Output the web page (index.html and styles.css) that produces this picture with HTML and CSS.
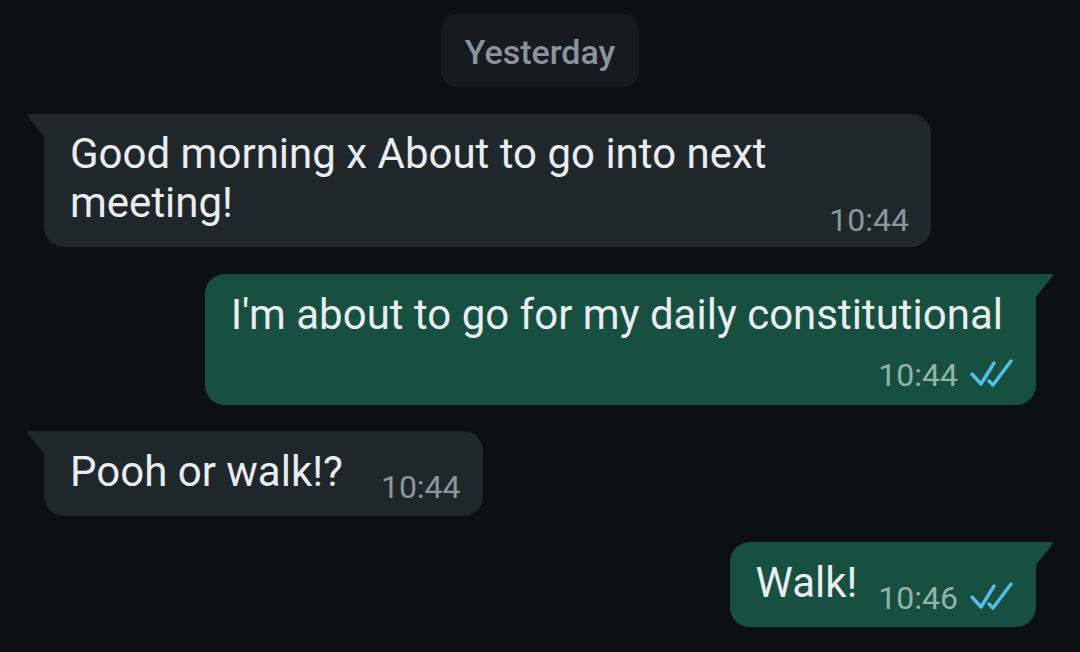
FILE: index.html
```html
<!DOCTYPE html>
<html lang="en">
<head>
<meta charset="utf-8">
<title>Chat</title>
<link rel="stylesheet" href="styles.css">
</head>
<body>
<main class="chat">
  <div class="date-pill">Yesterday</div>

  <div class="bubble in wrap">
    <span class="text">Good morning x About to go into next meeting!</span>
    <span class="meta">10:44</span>
  </div>

  <div class="bubble out stack">
    <span class="text">I'm about to go for my daily constitutional</span>
    <span class="meta">10:44
      <svg class="ticks" viewBox="0 0 44 28" width="44" height="28" aria-hidden="true">
        <path d="M2 15 L11 25 L24 4" />
        <path d="M19 22 L23 26 L41 2" />
      </svg>
    </span>
  </div>

  <div class="bubble in row">
    <span class="text">Pooh or walk!?</span>
    <span class="meta">10:44</span>
  </div>

  <div class="bubble out row">
    <span class="text">Walk!</span>
    <span class="meta">10:46
      <svg class="ticks" viewBox="0 0 44 28" width="44" height="28" aria-hidden="true">
        <path d="M2 15 L11 25 L24 4" />
        <path d="M19 22 L23 26 L41 2" />
      </svg>
    </span>
  </div>
</main>
</body>
</html>
```
FILE: styles.css
```css
html, body {
  margin: 0;
  padding: 0;
  background: #0b1014;
}

body {
  width: 1080px;
  height: 652px;
  overflow: hidden;
  font-family: Roboto, "Noto Sans", "Liberation Sans", sans-serif;
}

.chat {
  display: flex;
  flex-direction: column;
  padding-top: 14px;
}

.date-pill {
  align-self: center;
  height: 73px;
  box-sizing: border-box;
  display: flex;
  align-items: center;
  padding: 3px 24px 0;
  border-radius: 16px;
  background: #151b1f;
  color: #8a959b;
  font-size: 34px;
  font-weight: 500;
  margin-bottom: 27px;
}

.bubble {
  position: relative;
  display: flex;
  box-sizing: border-box;
  max-width: 887px;
  border-radius: 20px;
  padding: 16px 22px 10px 26px;
  margin-bottom: 26px;
}

.bubble::before {
  content: "";
  position: absolute;
  top: 0;
  width: 18px;
  height: 24px;
}

.bubble.in {
  align-self: flex-start;
  margin-left: 44px;
  background: #1f272b;
  border-top-left-radius: 0;
}

.bubble.in::before {
  left: -17px;
  background: #1f272b;
  clip-path: polygon(0 0, 100% 0, 100% 100%, 1px 3px);
}

.bubble.out {
  align-self: flex-end;
  margin-right: 44px;
  background: #175040;
  border-top-right-radius: 0;
}

.bubble.out::before {
  right: -17px;
  background: #175040;
  clip-path: polygon(0 0, 100% 0, calc(100% - 1px) 3px, 0 100%);
}

.text {
  font-size: 42px;
  line-height: 49px;
  color: #e9edef;
}

.meta {
  display: flex;
  align-items: flex-end;
  gap: 12px;
  font-size: 32px;
  line-height: 37px;
  white-space: nowrap;
  color: #8d9599;
}

.bubble.out .meta {
  color: #93b3a8;
}

.ticks {
  fill: none;
  stroke: #53bdeb;
  stroke-width: 3.4;
  stroke-linecap: round;
  stroke-linejoin: round;
  margin-bottom: 7px;
}

/* wrapped text, time tucked into last line */
.bubble.wrap {
  flex-direction: column;
  padding-top: 15px;
  padding-bottom: 8px;
  margin-bottom: 27px;
}
.bubble.wrap .meta {
  align-self: flex-end;
  margin-top: -25px;
}

/* time on its own line */
.bubble.stack {
  flex-direction: column;
  padding-right: 33px;
  padding-bottom: 11px;
}
.bubble.stack .meta {
  align-self: flex-end;
  margin-top: 18px;
  margin-right: -11px;
}

/* short message, time beside */
.bubble.row {
  flex-direction: row;
  align-items: flex-start;
}
.bubble.row .meta {
  margin-top: 22px;
}
.bubble.in.row .meta {
  margin-left: 38px;
}
.bubble.out.row .meta {
  margin-left: 21px;
}
.bubble.out.row {
  padding-right: 22px;
}
```
